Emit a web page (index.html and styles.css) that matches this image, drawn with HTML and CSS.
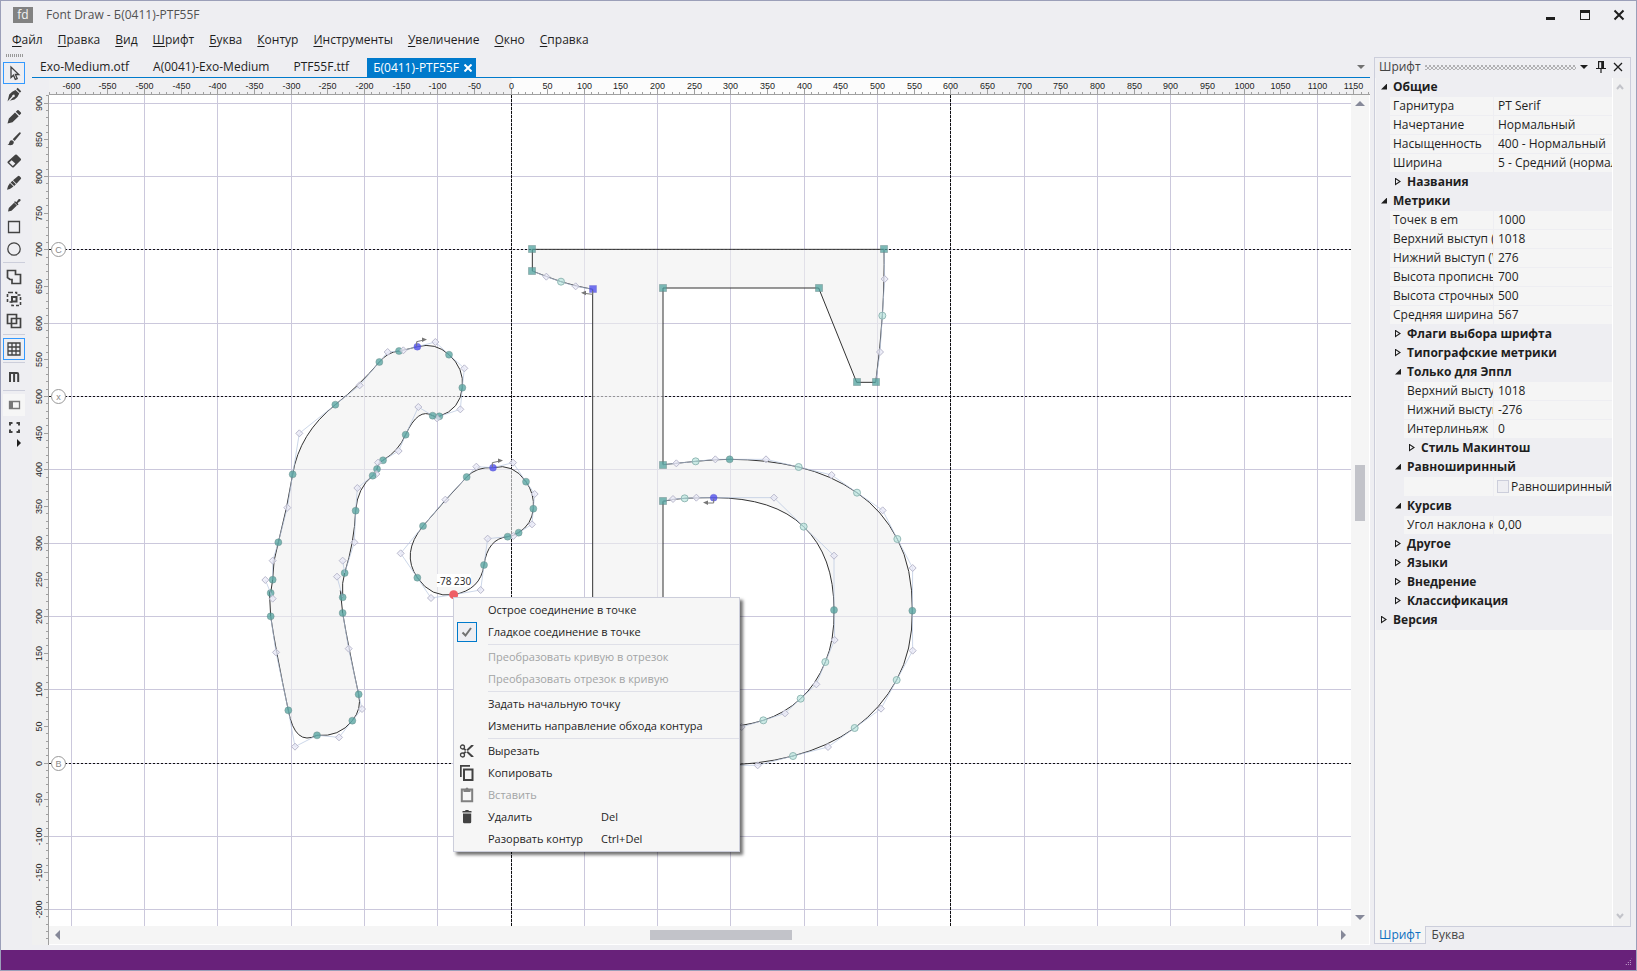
FILE: index.html
```html
<!DOCTYPE html>
<html lang="ru">
<head>
<meta charset="utf-8">
<title>Font Draw - Б(0411)-PTF55F</title>
<link rel="stylesheet" href="styles.css">
</head>
<body>
<header class="titlebar">
  <span class="logo">fd</span>
  <h1 class="title">Font Draw - Б(0411)-PTF55F</h1>
  <div class="window-buttons">
    <button type="button" aria-label="Свернуть"><svg viewBox="0 0 12 12"><path d="M1 8h9v3H1z"/></svg></button>
    <button type="button" aria-label="Развернуть"><svg viewBox="0 0 12 12"><path fill-rule="evenodd" d="M1 1h10v10H1zM2 4v6h8V4z"/></svg></button>
    <button type="button" aria-label="Закрыть"><svg viewBox="0 0 12 12"><path class="line2" d="M1.500 1.500l9 9M10.500 1.500l-9 9"/></svg></button>
  </div>
</header>
<nav class="menubar">
  <button type="button"><u>Ф</u>айл</button>
  <button type="button"><u>П</u>равка</button>
  <button type="button"><u>В</u>ид</button>
  <button type="button"><u>Ш</u>рифт</button>
  <button type="button"><u>Б</u>уква</button>
  <button type="button"><u>К</u>онтур</button>
  <button type="button"><u>И</u>нструменты</button>
  <button type="button"><u>У</u>величение</button>
  <button type="button"><u>О</u>кно</button>
  <button type="button"><u>С</u>правка</button>
</nav>
<main class="workspace">
  <div class="toolbar" role="toolbar" aria-label="Инструменты">
    <div class="grip"></div>
    <button type="button" class="tool active" aria-label="Выделение"><svg viewBox="0 0 16 16"><path class="line" d="M5 2v10.500l2.500-2.300 1.800 4.200 1.900-.8-1.800-4.100h3.400z"/></svg></button>
    <button type="button" class="tool" aria-label="Перо"><svg viewBox="0 0 16 16"><path d="M1.500 14.500L3.200 7.500Q6 4 9.500 3l3.800 3.600Q12 10.500 8.500 12.500l-4 1-1.300 1 4-4.300a1.300 1.300 0 1 0-1-1zM10.300 2.300l1.400-1.500 3.500 3.500-1.300 1.400z"/></svg></button>
    <button type="button" class="tool" aria-label="Карандаш"><svg viewBox="0 0 16 16"><path d="M1.500 14.500l1.400-5L9 3.500l3.700 3.700-6.200 6zM9.800 2.700l1.500-1.500q.7-.5 1.300 0l2.300 2.300q.5.700 0 1.300l-1.500 1.500z"/></svg></button>
    <button type="button" class="tool" aria-label="Кисть"><svg viewBox="0 0 16 16"><path d="M1.500 13.800q1.600-.5 1.800-2.300Q3.700 9 6 9.200q2.200.7 1.800 2.800-1 3.200-6.300 1.800zM6.700 8.300l6.600-6.800q1.300-.5 1.500.9L8.600 10z"/></svg></button>
    <button type="button" class="tool" aria-label="Ластик"><svg viewBox="0 0 16 16"><path fill-rule="evenodd" d="M9.200 1.700q.8-.6 1.600 0l4 4q.6.800 0 1.600l-7 7q-.8.600-1.600 0l-4.500-4.200q-.6-.8 0-1.600zM5.700 7.200L3.200 9.600 6.800 13l2.500-2.400z"/></svg></button>
    <button type="button" class="tool" aria-label="Нож"><svg viewBox="0 0 16 16"><path d="M1 14.800q.5-3.900 3-6.700l3.500 3.500q-2.700 2.500-6.500 3.200zM4.600 7.500l1.800-1.700 3.500 3.500-1.700 1.700zM7 5.200l4.800-4q1-.8 1.800 0l1.200 1.200q.7.900 0 1.700l-4.300 4.700z"/></svg></button>
    <button type="button" class="tool" aria-label="Пипетка"><svg viewBox="0 0 16 16"><path d="M2 14.500l.8-3.500 5.300-5.200 2.800 2.700-5.400 5.200zM8.700 4.200L10.500 5l2-2.700q1-.8 1.800 0 .7 1 0 1.800l-2.600 2 .8 1.700-1.200.5-3.100-3.100z"/></svg></button>
    <button type="button" class="tool" aria-label="Прямоугольник"><svg viewBox="0 0 16 16"><path class="line" d="M2.500 2.500h11v11h-11z"/></svg></button>
    <button type="button" class="tool" aria-label="Эллипс"><svg viewBox="0 0 16 16"><circle class="line" cx="8" cy="8" r="6.200"/></svg></button>
    <hr>
    <button type="button" class="tool" aria-label="Объединение"><svg viewBox="0 0 16 16"><path class="line bold" d="M1.500 1.500h8v4h5v9h-8.500v-4h-2l-2.500-2z"/></svg></button>
    <button type="button" class="tool" aria-label="Пересечение"><svg viewBox="0 0 16 16"><path class="line dash" d="M4 1.500H10.500V4H14.500V14.500H6V11H1.500V1.500z"/><path class="line2" d="M6 6h4.500v4.500H6z"/></svg></button>
    <button type="button" class="tool" aria-label="Исключение"><svg viewBox="0 0 16 16"><path class="line bold" d="M1.500 1.500h9v9h-9zM5.500 5.500h9v9h-9z"/></svg></button>
    <hr>
    <button type="button" class="tool active" aria-label="Сетка"><svg viewBox="0 0 16 16"><path class="line" d="M2 2h12v12H2zM6 2v12M10 2v12M2 6h12M2 10h12"/></svg></button>
    <hr>
    <button type="button" class="tool" aria-label="Метрики"><svg viewBox="0 0 16 16"><path class="line2" d="M4 13V4h7q1.200 0 1.200 1.200V13M8.100 4v9"/></svg></button>
    <hr>
    <button type="button" class="tool light" aria-label="Панель"><svg viewBox="0 0 16 16"><path class="line" d="M3.500 4.500h10v7h-10z"/><path d="M3 4h4v8H3z"/></svg></button>
    <button type="button" class="tool" aria-label="Вписать"><svg viewBox="0 0 16 16"><path class="line2" d="M4 6.500V4h2.500M10.500 4H13v2.500M13 10.500V13h-2.500M6.500 13H4v-2.500"/></svg></button>
    <button type="button" class="more" aria-label="Ещё"><svg viewBox="0 0 4 8"><path d="M0 0l4 4-4 4z"/></svg></button>
  </div>

  <section class="document">
    <div class="tabs" role="tablist">
      <button type="button" role="tab" class="tab">Exo-Medium.otf</button>
      <button type="button" role="tab" class="tab">A(0041)-Exo-Medium</button>
      <button type="button" role="tab" class="tab">PTF55F.ttf</button>
      <div class="tab current"><button type="button" role="tab" aria-selected="true">Б(0411)-PTF55F</button><button type="button" class="close" aria-label="Закрыть вкладку"><svg viewBox="0 0 8 8"><path class="line2" d="M.5.5l7 7M7.500.5l-7 7"/></svg></button></div>
      <button type="button" class="tab-list" aria-label="Список вкладок"><svg viewBox="0 0 8 4"><path d="M0 0h8L4 4z"/></svg></button>
    </div>
    <div class="editor">
      <svg class="ruler-x" id="ruler-x"></svg>
      <svg class="ruler-y" id="ruler-y"></svg>
      <div class="canvas">
        <svg class="drawing" id="drawing"></svg>
        <div class="context-menu" role="menu">
          <button type="button" role="menuitem"><i></i><span>Острое соединение в точке</span></button>
          <button type="button" role="menuitem"><i class="checked"><svg viewBox="0 0 16 16"><path class="line2" d="M3.500 8.500l3 3 5.500-7.500"/></svg></i><span>Гладкое соединение в точке</span></button>
          <hr>
          <button type="button" role="menuitem" disabled><i></i><span>Преобразовать кривую в отрезок</span></button>
          <button type="button" role="menuitem" disabled><i></i><span>Преобразовать отрезок в кривую</span></button>
          <hr>
          <button type="button" role="menuitem"><i></i><span>Задать начальную точку</span></button>
          <button type="button" role="menuitem"><i></i><span>Изменить направление обхода контура</span></button>
          <hr>
          <button type="button" role="menuitem"><i><svg viewBox="0 0 16 16"><circle class="line" cx="3.500" cy="4" r="2"/><circle class="line" cx="3.500" cy="12" r="2"/><path d="M5 4.500l9.500 8.800v.7h-2.300L4.300 6.200zM5 11.500l9.500-8.800V2h-2.300L4.300 9.800z"/></svg></i><span>Вырезать</span></button>
          <button type="button" role="menuitem"><i><svg viewBox="0 0 16 16"><path class="line2" d="M5 4.500h8.500V15H5z"/><path d="M1 0h10v1.700H2.700V12H1z"/></svg></i><span>Копировать</span></button>
          <button type="button" role="menuitem" disabled><i><svg viewBox="0 0 16 16"><path class="line2" d="M2.800 2.500h10.400v11.700H2.800z"/><path d="M4.500 2h2q.2-1.500 1.500-1.500T9.500 2h2v3h-7z"/></svg></i><span>Вставить</span></button>
          <button type="button" role="menuitem"><i><svg viewBox="0 0 16 16"><path d="M3.500 2H6l.7-1h2.600L10 2h2.500v1.500h-9zM4 4.500h8.200V13q0 1.200-1.200 1.200H5.200Q4 14.200 4 13z"/></svg></i><span>Удалить</span><kbd>Del</kbd></button>
          <button type="button" role="menuitem"><i></i><span>Разорвать контур</span><kbd>Ctrl+Del</kbd></button>
        </div>
      </div>
      <div class="scroll-y">
        <svg viewBox="0 0 10 5"><path d="M0 5h10L5 0z"/></svg>
        <div class="track"><div class="before"></div><div class="thumb"></div><div class="after"></div></div>
        <svg viewBox="0 0 10 5"><path d="M0 0h10L5 5z"/></svg>
      </div>
      <div class="scroll-x">
        <svg viewBox="0 0 5 10"><path d="M5 0v10L0 5z"/></svg>
        <div class="track"><div class="before"></div><div class="thumb"></div><div class="after"></div></div>
        <svg viewBox="0 0 5 10"><path d="M0 0v10l5-5z"/></svg>
      </div>
    </div>
  </section>

  <aside class="panel">
    <div class="panel-head">
      <h2>Шрифт</h2><span class="dots"></span>
      <button type="button" aria-label="Меню панели"><svg viewBox="0 0 12 12"><path d="M2 4h8L6 8z"/></svg></button>
      <button type="button" aria-label="Закрепить"><svg viewBox="0 0 12 12"><path d="M3 0h6v7h2v1H6.600v4H5.400V8H1V7h2zM4.200 1.200V7h2V1.200z" fill-rule="evenodd"/></svg></button>
      <button type="button" aria-label="Закрыть панель"><svg viewBox="0 0 12 12"><path class="line" d="M2 2l8 8M10 2l-8 8"/></svg></button>
    </div>
    <div class="panel-body">
      <div class="props">
        <button type="button" class="group open">Общие</button>
        <div class="row"><label for="p1">Гарнитура</label><input id="p1" value="PT Serif"></div>
        <div class="row"><label for="p2">Начертание</label><input id="p2" value="Нормальный"></div>
        <div class="row"><label for="p3">Насыщенность</label><input id="p3" value="400 - Нормальный"></div>
        <div class="row"><label for="p4">Ширина</label><input id="p4" value="5 - Средний (нормальный)"></div>
        <button type="button" class="group sub">Названия</button>
        <button type="button" class="group open">Метрики</button>
        <div class="row"><label for="p5">Точек в em</label><input id="p5" value="1000"></div>
        <div class="row"><label for="p6">Верхний выступ (Win)</label><input id="p6" value="1018"></div>
        <div class="row"><label for="p7">Нижний выступ (Win)</label><input id="p7" value="276"></div>
        <div class="row"><label for="p8">Высота прописных</label><input id="p8" value="700"></div>
        <div class="row"><label for="p9">Высота строчных</label><input id="p9" value="500"></div>
        <div class="row"><label for="p10">Средняя ширина символа</label><input id="p10" value="567"></div>
        <button type="button" class="group sub">Флаги выбора шрифта</button>
        <button type="button" class="group sub">Типографские метрики</button>
        <button type="button" class="group sub open">Только для Эппл</button>
        <div class="row sub"><label for="p11">Верхний выступ</label><input id="p11" value="1018"></div>
        <div class="row sub"><label for="p12">Нижний выступ</label><input id="p12" value="-276"></div>
        <div class="row sub"><label for="p13">Интерлиньяж</label><input id="p13" value="0"></div>
        <button type="button" class="group deep">Стиль Макинтош</button>
        <button type="button" class="group sub open">Равноширинный</button>
        <div class="row sub check"><span></span><label for="p14"><input type="checkbox" id="p14">Равноширинный</label></div>
        <button type="button" class="group sub open">Курсив</button>
        <div class="row sub"><label for="p15">Угол наклона курсива</label><input id="p15" value="0,00"></div>
        <button type="button" class="group sub">Другое</button>
        <button type="button" class="group sub">Языки</button>
        <button type="button" class="group sub">Внедрение</button>
        <button type="button" class="group sub">Классификация</button>
        <button type="button" class="group">Версия</button>
      </div>
      <div class="panel-scroll">
        <svg viewBox="0 0 8 6"><path class="line2" d="M1 5l3-3.500L7 5"/></svg>
        <svg viewBox="0 0 8 6"><path class="line2" d="M1 1l3 3.500L7 1"/></svg>
      </div>
    </div>
    <div class="panel-tabs" role="tablist">
      <button type="button" role="tab" class="selected" aria-selected="true">Шрифт</button>
      <button type="button" role="tab">Буква</button>
    </div>
  </aside>
</main>
<footer class="status"><span class="resize"></span></footer>
<script src="app.js"></script>
</body>
</html>
```
FILE: styles.css
```css
* { box-sizing: border-box; }

body {
  margin: 0;
  height: 100vh;
  display: flex;
  flex-direction: column;
  border: 1px solid #9b9fb9;
  background: #eeeef2;
  color: #1e1e1e;
  font: 12px/16px "Open Sans", "Noto Sans", sans-serif;
  overflow: hidden;
}

button, input {
  font: inherit;
  color: inherit;
  background: none;
  border: 0;
  padding: 0;
  margin: 0;
}

svg { display: block; fill: currentColor; }
.line { fill: none; stroke: currentColor; stroke-width: 1.3; }
.line.bold { stroke-width: 1.7; }
.line2 { fill: none; stroke: currentColor; stroke-width: 2; }
.line.dash { stroke-dasharray: 3 2; stroke-width: 1.6; }

.titlebar { display: flex; align-items: center; height: 27px; padding-left: 12px; }
.logo {
  width: 20px;
  height: 16px;
  background: #828282;
  color: #f4f4f4;
  font-size: 12px;
  line-height: 15px;
  text-align: center;
}
.title { margin: 0 0 0 13px; font-size: 12px; font-weight: 400; color: #525252; }
.window-buttons { display: flex; gap: 22px; margin-left: auto; padding-right: 11px; }
.window-buttons svg { width: 12px; height: 12px; }

.menubar { display: flex; height: 24px; padding-left: 3px; align-items: center; }
.menubar button { padding: 0 7px 0 8px; }
.menubar u { text-underline-offset: 2px; }

.workspace { flex: 1; display: flex; min-height: 0; padding: 0 5px 5px 0; }

.toolbar { width: 31px; padding: 2px 0 0 2px; flex: none; color: #424242; }
.grip {
  width: 17px;
  height: 3px;
  margin: 0 0 5px 3px;
  background: repeating-linear-gradient(90deg, #999 0 1px, transparent 1px 2px);
}
.tool { display: flex; width: 22px; height: 22px; align-items: center; justify-content: center; }
.tool svg { width: 16px; height: 16px; }
.tool.active { border: 1px solid #3399ff; }
.tool.light { background: #f6f6f6; color: #777; }
.toolbar hr { width: 22px; height: 1px; margin: 2px 0 3px; border: 0; background: #cccedb; }
.more { display: block; margin: 1px 0 0 14px; color: #1e1e1e; }
.more svg { width: 4px; height: 8px; }

.document { flex: 1; min-width: 0; display: flex; flex-direction: column; padding-top: 5px; }
.tabs { display: flex; height: 21px; padding-left: 2px; border-bottom: 1px solid #007acc; }
.tab { padding: 0 18px 0 6px; height: 20px; line-height: 20px; white-space: nowrap; }
.tab.current { display: flex; align-items: center; gap: 5px; padding-right: 4px; background: #007acc; color: #fff; margin-top: 1px; height: 19px; }
.close svg { width: 8px; height: 8px; }
.tab-list { margin-left: auto; padding-right: 5px; color: #717171; }
.tab-list svg { width: 8px; height: 4px; }

.editor {
  flex: 1;
  min-height: 0;
  display: grid;
  grid-template: 17px minmax(0, 1fr) 19px / 17px minmax(0, 1fr) 19px;
}
.editor svg text { font: 9px "Liberation Sans", sans-serif; fill: #1e1e1e; text-anchor: middle; }
.ruler-x { grid-area: 1 / 2 / 2 / 4; width: 100%; height: 17px; background: #f0f0f2; }
.ruler-y { grid-area: 2 / 1 / 4 / 2; width: 17px; height: 100%; background: #f0f0f0; }
.tick, .edge { stroke: #a0a0a0; stroke-width: 1; shape-rendering: crispEdges; fill: none; }
.advance { fill: #fcfcfc; }

.canvas { grid-area: 2 / 2; position: relative; background: #fff; }
.drawing { width: 100%; height: 100%; overflow: hidden; }
.grid-line { stroke: #cbc8dc; stroke-width: 1; shape-rendering: crispEdges; fill: none; }
.guide { stroke: #111; stroke-width: 1; stroke-dasharray: 2 2; shape-rendering: crispEdges; fill: none; }
.guide.upright { stroke-dasharray: 3 1; }
.badge circle { fill: #fff; stroke: #999; }
.drawing .badge text { fill: #888; }
.glyph { fill: rgba(240, 240, 240, .6); stroke: #333; stroke-width: 1; }
.handle { stroke: #b7c6df; stroke-width: 1; fill: none; opacity: .7; }
.off { fill: rgba(232, 232, 247, .7); stroke: #b9b9cc; stroke-width: 1; }
.smooth, .corner { fill: rgba(80, 162, 158, .75); stroke: rgba(100, 130, 130, .4); }
.implied { fill: rgba(165, 222, 214, .55); stroke: #93b9b6; }
.start { fill: rgba(70, 70, 235, .75); stroke: rgba(90, 90, 200, .3); }
.picked { fill: #ee5f66; stroke: none; }
.direction { fill: none; stroke: #777; stroke-width: 1; }
.direction-head { fill: #777; }
.hint { fill: #fff; }
.drawing .coords { font: 10px "Open Sans", sans-serif; }

.context-menu {
  position: absolute;
  left: 404px;
  top: 502px;
  width: 287px;
  padding: 1px 0;
  background: #f6f6f6;
  border: 1px solid #cccedb;
  box-shadow: 3px 3px 3px rgba(0, 0, 0, .55);
  font-size: 11px;
}
.context-menu button { display: flex; align-items: center; width: 100%; height: 22px; padding-left: 3px; text-align: left; }
.context-menu button:disabled { color: #a2a4a5; }
.context-menu i { display: flex; width: 20px; height: 20px; margin-right: 11px; align-items: center; justify-content: center; color: #424242; }
.context-menu button:disabled i { color: #808080; }
.context-menu i svg { width: 16px; height: 16px; }
.context-menu .checked { border: 1px solid #007acc; background: #eeeef2; color: #717171; }
.context-menu span { min-width: 113px; white-space: nowrap; }
.context-menu kbd { font: inherit; }
.context-menu hr { height: 1px; margin: 1px 0 1px 34px; border: 0; background: #dfe0e8; }

.scroll-y, .scroll-x { display: flex; background: #f5f5f5; color: #868999; align-items: center; }
.scroll-y { grid-area: 2 / 3; flex-direction: column; padding: 6px 0; border-right: 1px solid #fff; }
.scroll-x { grid-area: 3 / 2 / 4 / 4; padding: 0 23px 0 6px; border-bottom: 1px solid #fff; border-right: 1px solid #fff; }
.scroll-y svg { width: 10px; height: 5px; }
.scroll-x svg { width: 5px; height: 10px; }
.track { flex: 1; display: flex; }
.scroll-y .track { flex-direction: column; }
.thumb { background: #c2c3c9; }
.scroll-y .thumb { width: 10px; height: 56px; }
.scroll-x .thumb { height: 10px; width: 142px; }
.scroll-y .before { flex: 359; }
.scroll-y .after { flex: 394; }
.scroll-x .before { flex: 590; }
.scroll-x .after { flex: 549; }

.panel { width: 257px; flex: none; margin: 5px 0 1px 4px; display: flex; flex-direction: column; }
.panel-head {
  display: flex;
  align-items: center;
  height: 21px;
  padding: 0 6px 2px 4px;
  border: 1px solid #cccedb;
  border-bottom: 0;
}
.panel-head h2 { margin: 0; font-size: 12px; font-weight: 400; line-height: 16px; color: #444; }
.panel-head svg { width: 12px; height: 12px; }
.panel-head button + button { margin-left: 5px; }
.dots {
  flex: 1;
  height: 5px;
  margin: 0 2px 0 4px;
  background:
    linear-gradient(#999, #999) 0 0 / 4px 4px,
    #eeeef2;
  background:
    conic-gradient(#999 0 0) 0 0 / 1px 1px no-repeat,
    radial-gradient(circle at 1px 1px, #888 0 1px, transparent 1px) 0 0 / 4px 4px,
    radial-gradient(circle at 1px 1px, #888 0 1px, transparent 1px) 2px 2px / 4px 4px;
  opacity: .6;
}
.panel-body { flex: 1; min-height: 0; display: flex; border: solid #cccedb; border-width: 0 1px; background: #f5f5f5; }
.props { flex: 1; min-width: 0; padding-left: 1px; }
.group {
  display: flex;
  align-items: center;
  width: 100%;
  height: 19px;
  padding: 0 0 2px 5px;
  background: #eeeef2;
  font-weight: 700;
  text-align: left;
}
.group::before {
  content: "";
  width: 6px;
  height: 8px;
  margin-right: 6px;
  background: #1e1e1e;
  clip-path: polygon(0 0, 6px 4px, 0 8px, 0 0, 1px 2px, 1px 6px, 4px 4px, 1px 2px);
}
.group.open::before { height: 6px; clip-path: polygon(100% 0, 100% 100%, 0 100%); }
.group.sub { padding-left: 19px; }
.group.deep { padding-left: 33px; }
.row {
  display: grid;
  grid-template-columns: 104px minmax(0, 1fr);
  height: 19px;
  padding-left: 14px;
  background: #eeeef2;
}
.row > * { height: 18px; background: #f5f5f5; padding-left: 3px; line-height: 18px; overflow: hidden; white-space: nowrap; min-width: 0; width: auto; }
.row > input { padding-left: 4px; }
.row > :first-child { border-right: 1px solid #eeeef2; }
.row.sub { padding-left: 28px; grid-template-columns: 90px minmax(0, 1fr); }
.row.check { height: 20px; }
.row.check > * { height: 19px; }
.check label { display: flex; align-items: center; gap: 2px; }
.check input { appearance: none; width: 13px; height: 13px; border: 1px solid #cccedb; background: #eeeef2; }
.panel-scroll {
  width: 18px;
  display: flex;
  flex-direction: column;
  justify-content: space-between;
  align-items: center;
  padding: 6px 3px 7px 0;
  background: #f0f0f1;
  border-left: 1px solid #fff;
  color: #c2c3c9;
}
.panel-scroll svg { width: 8px; height: 6px; }
.panel-tabs { display: flex; height: 18px; background: linear-gradient(#cccedb, #cccedb) 0 0 / 100% 1px no-repeat; }
.panel-tabs button { padding: 0 6px; line-height: 16px; color: #444; }
.panel-tabs .selected { padding: 0 4px; border: 1px solid #cccedb; border-top: 0; background: #f5f5f5; color: #0e70c0; }

.status { height: 20px; flex: none; background: #68217a; display: flex; justify-content: flex-end; align-items: flex-end; padding: 4px; }
.resize {
  width: 8px;
  height: 8px;
  background:
    repeating-linear-gradient(90deg, transparent 0 1px, #68217a 1px 2px),
    repeating-linear-gradient(#b48dbf 0 1px, transparent 1px 2px);
  clip-path: polygon(100% 0, 100% 100%, 0 100%);
}
```
FILE: app.js
```js
const NS = "http://www.w3.org/2000/svg";
const ORIGIN = { x: 462, y: 668 };
const SCALE = 0.733;

function add(parent, tag, attrs, text) {
  const el = document.createElementNS(NS, tag);
  for (const key in attrs) el.setAttribute(key, attrs[key]);
  if (text !== undefined) el.textContent = text;
  parent.append(el);
  return el;
}

const toX = u => Math.floor(ORIGIN.x + u * SCALE) + 0.5;
const toY = u => Math.floor(ORIGIN.y - u * SCALE) + 0.5;

function drawRulers() {
  const rx = document.getElementById("ruler-x");
  add(rx, "rect", { class: "advance", x: toX(0), y: 0, width: toX(600) - toX(0), height: 16 });
  for (let u = -630; u <= 1170; u += 10) {
    const x = toX(u), major = u % 50 === 0;
    add(rx, "path", { class: "tick", d: `M${x} ${major ? 11 : 14}V17` });
    if (major && u >= -600) add(rx, "text", { x, y: 11 }, u);
  }
  add(rx, "path", { class: "edge", d: "M0 16.5H4000" });

  const ry = document.getElementById("ruler-y");
  for (let u = 910; u >= -240; u -= 10) {
    const y = toY(u), major = u % 50 === 0;
    add(ry, "path", { class: "tick", d: `M${major ? 12 : 14} ${y}H17` });
    if (major && u >= -200) add(ry, "text", { transform: `translate(10 ${y}) rotate(-90)` }, u);
  }
  add(ry, "path", { class: "edge", d: "M16.5 0V4000" });
}

/* Kinds: b start, d smooth, l implied, c off-curve, s corner,
   S start corner, r selected, h plain point without a marker */
const contours = [
  { at: [191, 225], pts: "532 80 b,586 66 c,627 104 d,673 145 c,667 203 d,661 268 c,598 289 d,591 295 c,578 287 d,535 261 c,497 344 d,476 393 c,429 421 d,414 428 c,411 447 d,409 462 c,398 467 d,352 504 c,347 572 d,343 667 c,314 759 d,308 790 h,308 832 d,301 812 h,308 879 d,326 986 c,356 1123 d,366 1167 c,337 1202 d,297 1252 c,231 1246 d,165 1280 c,145 1171 d,108 997 c,92 889 d,88 810 h,92 819 d,98 779 d,98 722 c,115 667 d,142 563 c,158 463 d,178 340 c,286 254 d,359 196 c,418 126 d,443 96 c,477 93 d,490 91 c" },
  { at: [191, 225], pts: "759 443 b,819 428 c,858 485 d,884 522 c,880 566 d,876 613 c,836 638 d,820 648 c,803 650 d,743 656 c,732 735 d,722 810 c,641 824 r,573 834 c,532 773 d,482 700 c,549 618 d,616 539 c,680 471 d,709 440 c" },
  { at: [451, 135], pts: "278 178 S,227 169 c,183 155 l,139 140 c,97 123 s,97 58 s,1152 58 s,1154 147 c,1147 257 l,1140 366 c,1127 457 s,1070 457 s,956 174 s,489 174 s,489 704 s,529 700 c,587 694 l,646 688 c,689 688 d,798 688 c,896 711 l,995 735 c,1071 788 l,1148 841 c,1192 927 l,1238 1014 c,1237 1142 d,1238 1262 c,1190 1350 l,1143 1436 c,1064 1494 l,984 1551 c,879 1578 l,773 1606 c,640 1606 h,278 1606 h" },
  { at: [451, 135], pts: "641 803 b,822 803 c,911 890 l,1002 977 c,1002 1140 d,1004 1230 c,976 1296 l,949 1363 c,902 1406 l,855 1450 c,790 1471 l,725 1491 c,640 1495 h,489 1480 h,489 814 s,519 807 c,554 805 l,589 803 c" }
];
const strayHandles = [[308, 722, 314, 759], [291, 770, 308, 832], [76, 780, 92, 819], [98, 836, 92, 819]];
const directions = [
  { at: [191, 225], d: [530, 78, 530, 65, 552, 60] },
  { at: [191, 225], d: [757, 441, 757, 428, 780, 423] },
  { at: [451, 135], d: [278, 182, 278, 193, 252, 190] },
  { at: [451, 135], d: [641, 806, 641, 819, 618, 819] }
];

function parse(contour) {
  return contour.pts.split(",").map(item => {
    const [x, y, kind] = item.split(" ");
    return { x: contour.at[0] + x / 3, y: contour.at[1] + y / 3, kind };
  });
}

function outline(pts) {
  let d = `M${pts[0].x} ${pts[0].y}`;
  for (let i = 1; i <= pts.length; i++) {
    const p = pts[i % pts.length];
    if (p.kind === "c") {
      const next = pts[(i + 1) % pts.length];
      d += `Q${p.x} ${p.y} ${next.x} ${next.y}`;
      i++;
    } else d += `L${p.x} ${p.y}`;
  }
  return d + "Z";
}

function diamond(svg, x, y) {
  add(svg, "path", { class: "off", d: `M${x} ${y - 3.5}l3.5 3.5-3.5 3.5-3.5-3.5z` });
}

function marker(svg, p) {
  const round = { d: "smooth", l: "implied", b: "start", r: "picked" }[p.kind];
  const square = { s: "corner", S: "start" }[p.kind];
  if (round) add(svg, "circle", { class: round, cx: p.x, cy: p.y, r: p.kind === "r" ? 4.5 : 3.5 });
  if (square) add(svg, "rect", { class: square, x: Math.round(p.x) - 3.5, y: Math.round(p.y) - 3.5, width: 7, height: 7 });
  if (p.kind === "c") diamond(svg, p.x, p.y);
}

function drawCanvas() {
  const svg = document.getElementById("drawing");
  for (let u = -600; u <= 3000; u += 100) add(svg, "path", { class: "grid-line", d: `M${toX(u)} 0V3000` });
  for (let u = 900; u >= -2000; u -= 100) add(svg, "path", { class: "grid-line", d: `M0 ${toY(u)}H4000` });
  for (const u of [0, 600]) add(svg, "path", { class: "guide upright", d: `M${toX(u)} 0V3000` });
  for (const [u, name] of [[700, "C"], [500, "x"], [0, "B"]]) {
    add(svg, "path", { class: "guide", d: `M0 ${toY(u)}H4000` });
    const badge = add(svg, "g", { class: "badge" });
    add(badge, "circle", { cx: 9.5, cy: toY(u), r: 7 });
    add(badge, "text", { x: 9.5, y: toY(u) + 3 }, name);
  }

  const shapes = contours.map(parse);
  const letter = shapes.slice(2).map(outline).join("");
  for (const d of [outline(shapes[0]), outline(shapes[1]), letter])
    add(svg, "path", { class: "glyph", "fill-rule": "evenodd", d });

  for (const pts of shapes) {
    pts.forEach((p, i) => {
      if (p.kind !== "c") return;
      const a = pts[i - 1], b = pts[(i + 1) % pts.length];
      add(svg, "path", { class: "handle", d: `M${a.x} ${a.y}L${p.x} ${p.y}L${b.x} ${b.y}` });
    });
    pts.forEach(p => marker(svg, p));
  }
  for (const [x, y, ex, ey] of strayHandles) {
    add(svg, "path", { class: "handle", d: `M${191 + x / 3} ${225 + y / 3}L${191 + ex / 3} ${225 + ey / 3}` });
    diamond(svg, 191 + x / 3, 225 + y / 3);
  }
  for (const { at: [ox, oy], d } of directions) {
    const [x1, y1, x2, y2, x3, y3] = d.map((v, i) => v / 3 + (i % 2 ? oy : ox));
    const way = Math.sign(x3 - x2);
    add(svg, "path", { class: "direction", d: `M${x1} ${y1}L${x2} ${y2}L${x3} ${y3}` });
    add(svg, "path", { class: "direction-head", d: `M${x3 + 3 * way} ${y3 - 0.5}l${-5 * way} -2v4.500z` });
  }

  add(svg, "rect", { class: "hint", x: 388, y: 479, width: 34, height: 13 });
  add(svg, "text", { class: "coords", x: 405, y: 490 }, "-78 230");
}

drawRulers();
drawCanvas();
```
